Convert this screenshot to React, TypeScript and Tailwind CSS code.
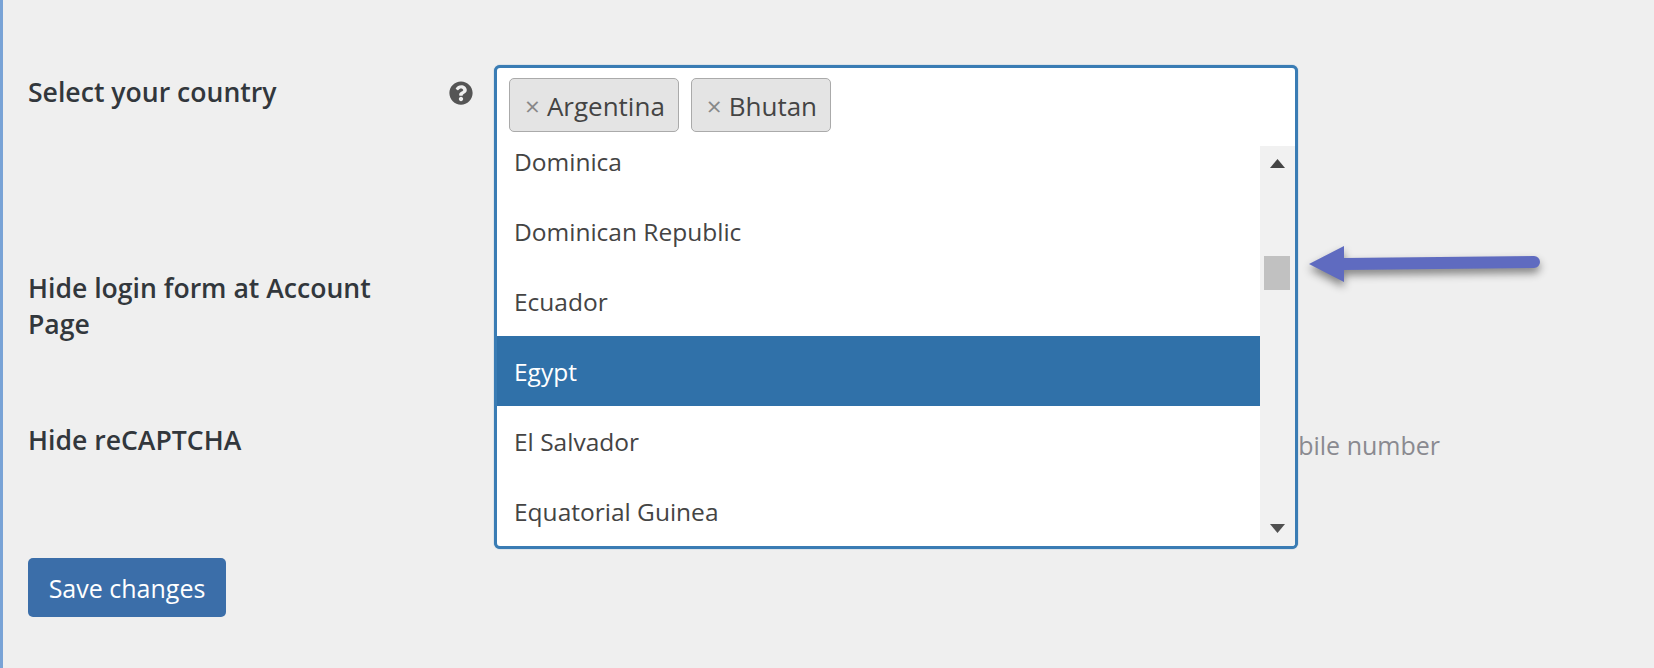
import { FaQuestionCircle } from 'react-icons/fa';

const countries = ['Dominica', 'Dominican Republic', 'Ecuador', 'Egypt', 'El Salvador', 'Equatorial Guinea'];
const selected = ['Argentina', 'Bhutan'];

function CountrySelect() {
  return (
    <div className="relative w-[804px] h-[81px] -ml-px">
      <div className="absolute inset-x-0 top-0 h-[484px] bg-white border-[3px] border-[#3a7cb4] rounded-[6px] overflow-hidden shadow-[0_0_1px_#3a7cb4]">
        <div className="flex gap-[12px] pl-[12px] pt-[10px] h-[78px]">
          {selected.map((name) => (
            <span
              key={name}
              className="flex items-center h-[54px] pl-[15px] pr-[13px] pt-[2px] gap-[7px] bg-[#e4e4e4] border border-[#aaaaaa] rounded-[5px] text-[26px] text-[#444444]"
            >
              <span className="text-[#888888]">×</span>
              {name}
            </span>
          ))}
        </div>
        <div className="flex h-[400px] overflow-hidden">
          <ul className="flex-1 -mt-[20px]">
            {countries.map((c) => (
              <li
                key={c}
                className={`h-[70px] flex items-center px-[17px] pt-[2px] text-[24.5px] ${
                  c === 'Egypt' ? 'bg-[#3071a9] text-white' : 'text-[#444444]'
                }`}
              >
                {c}
              </li>
            ))}
          </ul>
          <div className="relative w-[35px] bg-[#f1f1f1]">
            <svg className="absolute left-[10px] top-[13px]" width="15" height="9" viewBox="0 0 15 9">
              <path d="M7.5 0 L15 9 L0 9 Z" fill="#444444" />
            </svg>
            <div className="absolute left-[4px] top-[110px] w-[26px] h-[34px] bg-[#c1c1c1]" />
            <svg className="absolute left-[10px] bottom-[13px]" width="15" height="9" viewBox="0 0 15 9">
              <path d="M0 0 L15 0 L7.5 9 Z" fill="#505050" />
            </svg>
          </div>
        </div>
      </div>
    </div>
  );
}

export default function App() {
  return (
    <div
      className="relative h-[668px] overflow-hidden bg-[#efefef] border-l-[3px] border-[#79a3d6] pl-[25px] pt-[65px] text-[#32373c]"
      style={{ fontFamily: '"Open Sans", "Noto Sans", sans-serif' }}
    >
      <div className="flex h-[205px]">
        <div className="w-[380px] pt-[9px] text-[26.6px] leading-[36px] font-semibold">Select your country</div>
        <div className="w-[87px] pl-[41px] pt-[16px]">
          <FaQuestionCircle className="text-[#555555]" size={24} />
        </div>
        <CountrySelect />
      </div>

      <div className="flex h-[152px]">
        <div className="w-[380px] text-[26.6px] leading-[36px] font-semibold">Hide login form at Account Page</div>
      </div>

      <div className="flex h-[136px]">
        <div className="w-[467px] text-[26.6px] leading-[36px] font-semibold">Hide reCAPTCHA</div>
        <div className="w-[945px] text-right text-[25px] leading-[46px] text-[#8a8a90] whitespace-nowrap">
          Hide reCAPTCHA on login with mobile number
        </div>
      </div>

      <button className="w-[198px] h-[59px] pt-[2px] bg-[#3b6ea9] rounded-[5px] text-white text-[25px]">
        Save changes
      </button>

      <svg
        className="absolute left-[1297px] top-[236px] drop-shadow-[0_5px_4px_rgba(0,0,0,0.45)]"
        width="250"
        height="60"
        viewBox="0 0 250 60"
      >
        <path d="M9 28 L44 10 L44 22 L234 20 A6 6 0 0 1 234 32 L44 34 L44 46 Z" fill="#5f6bc0" />
      </svg>
    </div>
  );
}
